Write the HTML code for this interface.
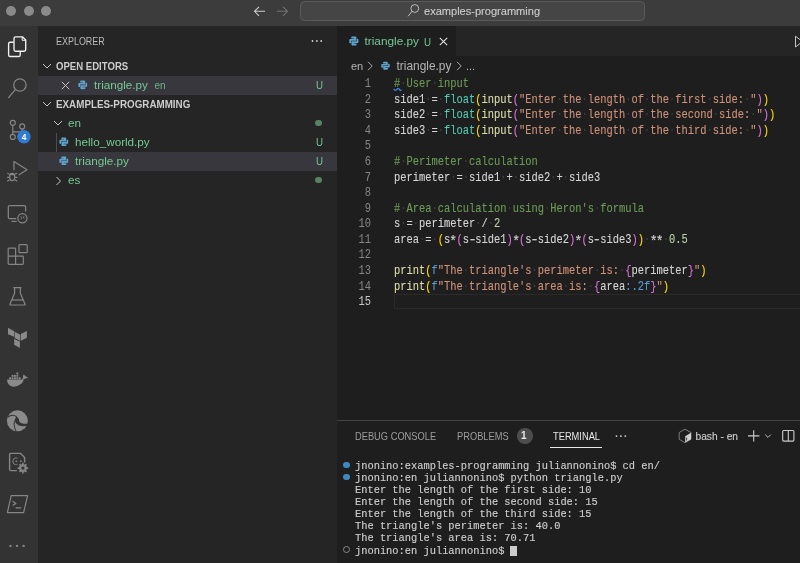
<!DOCTYPE html>
<html><head><meta charset="utf-8">
<style>
*{margin:0;padding:0;box-sizing:border-box}
html,body{width:800px;height:563px;overflow:hidden;background:#1e1e1e;font-family:"Liberation Sans",sans-serif}
.a{position:absolute}
b{font-weight:normal}i{font-style:normal}

#title{left:0;top:0;width:800px;height:26px;background:#3c3c3c}
.tl{width:10.2px;height:10.2px;border-radius:50%;background:#8a8a8a;top:6.1px}
#search{left:299.8px;top:1.2px;width:345px;height:20px;border:1px solid #5a5a5a;border-radius:4.5px;background:#454545}
#act{left:0;top:26px;width:38px;height:537px;background:#333333}
#side{left:38px;top:26px;width:299px;height:537px;background:#252526}
#tabs{left:337px;top:26px;width:463px;height:30px;background:#252526}
#tab{left:337px;top:26px;width:119px;height:30px;background:#1e1e1e}
.sans{font-family:"Liberation Sans",sans-serif;white-space:pre}
.row{left:38px;width:299px;height:19px}
.sel{background:#37373d}
.git{color:#73c991}
.hdr{font-weight:bold;font-size:10.4px;color:#cccccc;line-height:19px;transform:scaleX(0.922);transform-origin:0 0}
.code{-webkit-text-stroke:0.12px currentColor;font-family:"Liberation Mono",monospace;font-size:11.9px;transform:scaleX(0.8754);transform-origin:0 0;white-space:pre;line-height:15.59px;height:15.59px;left:394px;color:#d4d4d4}
.ln{font-family:"Liberation Mono",monospace;font-size:11.9px;transform:scaleX(0.8754);transform-origin:100% 0;white-space:pre;line-height:15.59px;height:15.59px;left:337px;width:34px;text-align:right;color:#858585}
.w{color:#3e3e3e;-webkit-text-stroke:0}
.ast{display:inline-block;transform:translateY(2.2px) scale(1.25)}
.hy{display:inline-block;transform:scaleX(1.45)}
.c{color:#6a9955}
.s{color:#ce9178}
.f{color:#dcdcaa}
.t{color:#4ec9b0}
.n{color:#b5cea8}
.k{color:#569cd6}
.b1{color:#ffd700}
.b2{color:#da70d6}
.ln.cur{color:#c6c6c6}
.term{-webkit-text-stroke:0.15px currentColor;font-family:"Liberation Mono",monospace;font-size:11.2px;transform:scaleX(0.927);transform-origin:0 0;white-space:pre;line-height:12.1px;height:12.1px;left:355px;color:#cccccc}
.ph{font-size:10.2px;color:#9d9d9d;line-height:16px;top:429px;transform:scaleX(0.913);transform-origin:0 0}
</style></head><body><div id="root" style="position:absolute;left:0;top:0;width:800px;height:563px;overflow:hidden;will-change:transform">
<svg width="0" height="0" style="position:absolute"><defs><symbol id="py" viewBox="0 0 10 10">
<path fill="#5fa3cc" d="M2.3 1.5Q2.3 0.5 3.3 0.5H6.5Q7.5 0.5 7.5 1.5V4.7H2.1V7.2H1.3Q0.3 7.2 0.3 6.2V4Q0.3 3 1.3 3H5.3V2.5H2.3Z"/>
<path fill="#5fa3cc" d="M7.7 8.5Q7.7 9.5 6.7 9.5H3.5Q2.5 9.5 2.5 8.5V5.3H7.9V2.8H8.7Q9.7 2.8 9.7 3.8V6Q9.7 7 8.7 7H4.7V7.5H7.7Z"/>
</symbol></defs></svg>
<div class="a" id="title"></div>
<div class="a tl" style="left:6.2px"></div>
<div class="a tl" style="left:23.6px"></div>
<div class="a tl" style="left:40.75px"></div>
<!-- nav arrows -->
<svg class="a" style="left:250px;top:4px" width="40" height="15" viewBox="0 0 40 15">
 <path d="M4.5 7.3h10.5M9 2.8L4.5 7.3L9 11.8" fill="none" stroke="#cccccc" stroke-width="1.1"/>
 <path d="M27 7.3h10.5M33 2.8L37.5 7.3L33 11.8" fill="none" stroke="#727272" stroke-width="1.1"/>
</svg>
<div class="a" id="search"></div>
<svg class="a" style="left:406px;top:3px" width="14" height="15" viewBox="0 0 14 15">
 <circle cx="8.8" cy="5.5" r="3.9" fill="none" stroke="#c0c0c0" stroke-width="0.95"/>
 <path d="M6 8.4L2.3 13" stroke="#c0c0c0" stroke-width="0.95" stroke-linecap="round"/>
</svg>
<div class="a sans" style="left:424px;top:4px;font-size:11.05px;line-height:14px;color:#cccccc;-webkit-text-stroke:0.12px currentColor">examples-programming</div>

<div class="a" id="act"></div>
<div class="a" id="side"></div>
<svg class="a" style="left:0;top:0" width="38" height="563" viewBox="0 0 38 563">
<defs></defs>
<!-- explorer -->
<g fill="none" stroke="#f2f2f2" stroke-width="1.35" stroke-linejoin="round">
 <path d="M13.6 42.2H10.2Q8.6 42.2 8.6 43.8V54.9Q8.6 56.5 10.2 56.5H18.6Q20.2 56.5 20.2 54.9V51.5"/>
 <path d="M15.6 36.8H22.4L25.7 40.1V49.6Q25.7 51.2 24.1 51.2H15.6Q14 51.2 14 49.6V38.4Q14 36.8 15.6 36.8Z"/>
 <path d="M22.2 37V40.3H25.5" stroke-width="1"/>
</g>
<!-- search -->
<g fill="none" stroke="#858585" stroke-width="1.3">
 <circle cx="19.9" cy="85" r="6.2"/>
 <path d="M15.6 89.3L8.3 97.8"/>
</g>
<!-- source control -->
<g fill="none" stroke="#858585" stroke-width="1.2">
 <circle cx="12.8" cy="122.8" r="2.5"/>
 <circle cx="22.2" cy="126.4" r="2.5"/>
 <circle cx="12.8" cy="136.9" r="2.5"/>
 <path d="M12.8 125.3V134.4"/>
 <path d="M22.2 128.9V129.6Q22.2 131.8 20 131.8H12.8"/>
</g>
<circle cx="23.95" cy="136.65" r="6.75" fill="#2f7bd4"/>
<text x="24" y="139.6" font-family="Liberation Sans" font-weight="bold" font-size="8.4" fill="#ffffff" text-anchor="middle">4</text>
<!-- run debug -->
<g fill="none" stroke="#858585" stroke-width="1.2" stroke-linejoin="round">
 <path d="M13.95 170.2V161.4L27 169.7L18.7 175"/>
 <ellipse cx="12.2" cy="177" rx="2.5" ry="3.6"/>
 <path d="M9.6 174.6H14.8M7.3 173.2L9.6 174.2M17.1 173.2L14.8 174.2M7.1 177.3H9.5M14.9 177.3H17.3M7.3 181.2L9.6 179.8M17.1 181.2L14.8 179.8"/>
</g>
<!-- remote explorer -->
<g fill="none" stroke="#858585" stroke-width="1.2">
 <path d="M16.2 218.6H9.6Q8.3 218.6 8.3 217.3V206.9Q8.3 205.6 9.6 205.6H24.3Q25.6 205.6 25.6 206.9V211.6"/>
 <path d="M11.5 221.4H16.8"/>
 <circle cx="22.4" cy="218.2" r="4.6"/>
 <path d="M20.6 216.3L22 217.8L20.6 219.3M24.4 216.4L23 217.3L24.4 218.2" stroke-width="0.9"/>
</g>
<!-- extensions -->
<g fill="none" stroke="#858585" stroke-width="1.2" stroke-linejoin="round">
 <path d="M8.2 256.2H15.6V248.9Q15.6 248.2 14.9 248.2H8.9Q8.2 248.2 8.2 248.9V263.6Q8.2 264.3 8.9 264.3H22.6Q23.3 264.3 23.3 263.6V256.9Q23.3 256.2 22.6 256.2H15.6V264.3"/>
 <rect x="19" y="244.7" width="8.2" height="8" rx="0.9"/>
</g>
<!-- flask -->
<g fill="none" stroke="#858585" stroke-width="1.2" stroke-linejoin="round">
 <path d="M13.3 287.6H21.5M14.6 287.6V293.3L9.9 304.3Q9.7 305 10.5 305H24.5Q25.3 305 25.1 304.3L20.3 293.3V287.6"/>
 <path d="M11.8 300H23.2"/>
</g>
<!-- terraform -->
<g fill="#8a8a8a">
 <path d="M8 327.7L14.2 331.2V336.7L8 334.2Z"/>
 <path d="M14.7 331.7L20.2 334.7V340.7L14.7 338Z"/>
 <path d="M14.2 338.9L19.9 341.6V347.9L14.2 344.8Z"/>
 <path d="M20.8 334.1L26.9 331V337.7L20.8 340.7Z"/>
</g>
<!-- docker -->
<g fill="#8a8a8a">
 <path d="M7 379.6H23.5Q24.8 379.2 25.6 378.2Q26.8 378.5 27.9 378.1Q27 376.6 25.3 376.3Q24.8 374.9 23.6 374.4Q22.6 375.8 23 377.6Q22.6 379 21.8 379.6Z"/>
 <path d="M7 379.6Q7.2 385 12 386.6Q17.5 387.2 21.5 383.6Q23.2 381.8 23.8 379.6Z"/>
 <rect x="9.2" y="377.3" width="1.9" height="1.9"/><rect x="11.6" y="377.3" width="1.9" height="1.9"/><rect x="14" y="377.3" width="1.9" height="1.9"/><rect x="16.4" y="377.3" width="1.9" height="1.9"/><rect x="18.8" y="377.3" width="1.9" height="1.9"/>
 <rect x="11.6" y="374.9" width="1.9" height="1.9"/><rect x="14" y="374.9" width="1.9" height="1.9"/><rect x="16.4" y="374.9" width="1.9" height="1.9"/>
 <rect x="16.4" y="372.5" width="1.9" height="1.9"/>
</g>
<!-- edge -->
<g>
 <circle cx="17.4" cy="420.8" r="10.5" fill="#8a8a8a"/>
 <path d="M7.6 417.2Q12.5 413.6 16.6 416.8" fill="none" stroke="#333333" stroke-width="1.1"/>
 <path d="M16.3 416.4Q19.6 418.4 19 421Q20.5 424.2 28 423.8L28 425.4Q19.6 427.6 16.2 423.6Q13.8 420.2 16.3 416.4Z" fill="#333333"/>
 <path d="M15.8 418.8Q12.2 423.6 16.2 431.6" fill="none" stroke="#333333" stroke-width="1"/>
</g>
<!-- c++ config -->
<g fill="none" stroke="#858585" stroke-width="1.4" stroke-linejoin="round">
 <path d="M16.8 470.6H10.6Q9.6 470.6 9.6 469.6V454.4Q9.6 453.4 10.6 453.4H20.6L24.6 457.4V462.6"/>
 <path d="M17.5 458.4Q16.6 457.9 15.6 457.9Q13 458 12.8 461.3Q13 464.6 15.6 464.7Q16.6 464.7 17.5 464.2" stroke-width="1"/>
 <path d="M15.3 461.3H17.3M16.3 460.3V462.3M19.8 461.3H21.8M20.8 460.3V462.3" stroke-width="0.8"/>
</g>
<g fill="#858585">
 <circle cx="22.9" cy="468.1" r="3.9"/>
 <path d="M22.1 462.8H23.7V473.4H22.1ZM17.6 467.3H28.2V468.9H17.6Z"/>
 <path d="M18.9 464.7L20.1 463.6L27 471.5L25.8 472.6Z M25.8 463.6L27 464.7L20.1 472.6L18.9 471.5Z"/>
 <circle cx="22.9" cy="468.1" r="1.6" fill="#333333"/>
</g>
<!-- terminal -->
<g fill="none" stroke="#858585" stroke-width="1.2" stroke-linejoin="round">
 <path d="M11.2 495.6H27.6L23.6 512.6H7.4Z"/>
 <path d="M12.6 501.2L15.9 503.4L12.6 505.6M15.6 507.9H21.2"/>
</g>
<!-- dots -->
<g fill="#858585"><circle cx="10.5" cy="545.9" r="1.2"/><circle cx="17" cy="545.9" r="1.2"/><circle cx="23.6" cy="545.9" r="1.2"/></g>
</svg>

<div class="a" id="tabs"></div>
<div class="a" id="tab"></div>

<!-- sidebar -->
<div class="a sans" style="left:55.5px;top:34px;font-size:10px;line-height:16px;color:#bbbbbb;transform:scaleX(0.895);transform-origin:0 0">EXPLORER</div>
<svg class="a" style="left:300px;top:30px" width="30" height="20" viewBox="300 30 30 20"><g fill="#d0d0d0"><circle cx="312.5" cy="41" r="0.9"/><circle cx="316.9" cy="41" r="0.9"/><circle cx="321.2" cy="41" r="0.9"/></g></svg>

<div class="a row" style="top:57px"></div>
<svg class="a" style="left:42px;top:62px" width="10" height="8" viewBox="0 0 10 8"><path d="M1 2l4 4l4-4" fill="none" stroke="#c5c5c5" stroke-width="1"/></svg>
<div class="a sans hdr" style="left:56px;top:57px">OPEN EDITORS</div>

<div class="a row sel" style="top:76px"></div>
<svg class="a" style="left:61px;top:81px" width="9" height="9" viewBox="0 0 9 9"><path d="M0.8 0.8l7.4 7.4M8.2 0.8l-7.4 7.4" stroke="#c5c5c5" stroke-width="1"/></svg>
<div class="a sans git" style="left:94px;top:77px;font-size:11.7px;line-height:15px">triangle.py</div>
<div class="a sans git" style="left:154.5px;top:79px;font-size:10px;line-height:14px;opacity:.85">en</div>
<div class="a sans git" style="left:315.8px;top:78px;font-size:10.8px;line-height:15px;transform:scaleX(0.9);transform-origin:0 0">U</div>

<div class="a row" style="top:95px"></div>
<svg class="a" style="left:42px;top:100px" width="10" height="8" viewBox="0 0 10 8"><path d="M1 2l4 4l4-4" fill="none" stroke="#c5c5c5" stroke-width="1"/></svg>
<div class="a sans hdr" style="left:56px;top:95px;transform:scaleX(0.946)">EXAMPLES-PROGRAMMING</div>

<svg class="a" style="left:53px;top:119px" width="10" height="8" viewBox="0 0 10 8"><path d="M1 2l4 4l4-4" fill="none" stroke="#c5c5c5" stroke-width="1"/></svg>
<div class="a sans git" style="left:68px;top:115.4px;font-size:11.7px;line-height:15px">en</div>
<div class="a" style="left:315px;top:119.5px;width:6.6px;height:6.6px;border-radius:50%;background:#58835f"></div>

<div class="a" style="left:55.5px;top:133px;width:1px;height:38px;background:#4e4e4e"></div>
<div class="a sans git" style="left:75px;top:134.4px;font-size:11.7px;line-height:15px">hello_world.py</div>
<div class="a sans git" style="left:315.8px;top:135px;font-size:10.8px;line-height:15px;transform:scaleX(0.9);transform-origin:0 0">U</div>

<div class="a row sel" style="top:152px"></div>

<div class="a sans git" style="left:75px;top:153.4px;font-size:11.7px;line-height:15px">triangle.py</div>
<div class="a sans git" style="left:315.8px;top:154px;font-size:10.8px;line-height:15px;transform:scaleX(0.9);transform-origin:0 0">U</div>

<svg class="a" style="left:55px;top:176px" width="8" height="10" viewBox="0 0 8 10"><path d="M1.5 1l4 4l-4 4" fill="none" stroke="#c5c5c5" stroke-width="1"/></svg>
<div class="a sans git" style="left:68px;top:172.4px;font-size:11.7px;line-height:15px">es</div>
<div class="a" style="left:315px;top:176.5px;width:6.6px;height:6.6px;border-radius:50%;background:#58835f"></div>

<!-- tab -->
<div class="a sans git" style="left:364.5px;top:34.4px;font-size:11.8px;line-height:15px">triangle.py</div>
<div class="a sans git" style="left:424.3px;top:34.6px;font-size:10.8px;line-height:15px;transform:scaleX(0.9);transform-origin:0 0">U</div>
<svg class="a" style="left:439px;top:36.5px" width="9" height="9" viewBox="0 0 9 9"><path d="M0.8 0.8l7.4 7.4M8.2 0.8l-7.4 7.4" stroke="#e0e0e0" stroke-width="1.1"/></svg>
<svg class="a" style="left:794px;top:35px" width="8" height="13" viewBox="0 0 8 13"><path d="M1.5 1.2v10.8l7-5.4z" fill="none" stroke="#c5c5c5" stroke-width="1"/></svg>

<!-- breadcrumbs -->
<div class="a sans" style="left:351px;top:59px;font-size:11px;line-height:15px;color:#b4b4b4">en</div>
<svg class="a" style="left:367px;top:61px" width="7" height="10" viewBox="0 0 7 10"><path d="M1 0.8l4.2 4.2l-4.2 4.2" fill="none" stroke="#a9a9a9" stroke-width="1"/></svg>
<div class="a sans" style="left:396.5px;top:59px;font-size:11.9px;line-height:15px;color:#b4b4b4">triangle.py</div>
<svg class="a" style="left:456px;top:61px" width="7" height="10" viewBox="0 0 7 10"><path d="M1 0.8l4.2 4.2l-4.2 4.2" fill="none" stroke="#a9a9a9" stroke-width="1"/></svg>
<div class="a sans" style="left:466px;top:59px;font-size:11px;line-height:15px;color:#b4b4b4">...</div>


<svg class="a" style="left:349.2px;top:36.1px" width="9.8" height="10"><use href="#py"/></svg>
<svg class="a" style="left:78.2px;top:80.2px" width="9.6" height="9.8"><use href="#py"/></svg>
<svg class="a" style="left:381.2px;top:61.2px" width="9" height="9.4"><use href="#py"/></svg>
<svg class="a" style="left:59.1px;top:137.4px" width="9.7" height="9.5"><use href="#py"/></svg>
<svg class="a" style="left:59.1px;top:156px" width="9.7" height="9.5"><use href="#py"/></svg>
<!-- CODE -->
<svg class="a" style="left:393px;top:87px" width="9" height="5" viewBox="0 0 9 5"><path d="M1 2.2Q2.2 4.3 3.6 2.6Q5.2 0.6 6.6 2.6Q7.4 3.8 8 3.2" fill="none" stroke="#3b84e4" stroke-width="1.3" stroke-linecap="round"/></svg>
<div class="a" style="left:394px;top:293.6px;width:406px;height:15px;border:1px solid #2a2a2a;border-right:none"></div>
<div class="a ln" style="top:77.00px">1</div>
<div class="a code" style="top:77.00px"><b class="c">#<i class="w">·</i>User<i class="w">·</i>input</b></div>
<div class="a ln" style="top:92.59px">2</div>
<div class="a code" style="top:92.59px">side1<i class="w">·</i>=<i class="w">·</i><b class="t">float</b><b class="b1">(</b><b class="f">input</b><b class="b2">(</b><b class="s">"Enter<i class="w">·</i>the<i class="w">·</i>length<i class="w">·</i>of<i class="w">·</i>the<i class="w">·</i>first<i class="w">·</i>side:<i class="w">·</i>"</b><b class="b2">)</b><b class="b1">)</b></div>
<div class="a ln" style="top:108.18px">3</div>
<div class="a code" style="top:108.18px">side2<i class="w">·</i>=<i class="w">·</i><b class="t">float</b><b class="b1">(</b><b class="f">input</b><b class="b2">(</b><b class="s">"Enter<i class="w">·</i>the<i class="w">·</i>length<i class="w">·</i>of<i class="w">·</i>the<i class="w">·</i>second<i class="w">·</i>side:<i class="w">·</i>"</b><b class="b2">)</b><b class="b1">)</b></div>
<div class="a ln" style="top:123.77px">4</div>
<div class="a code" style="top:123.77px">side3<i class="w">·</i>=<i class="w">·</i><b class="t">float</b><b class="b1">(</b><b class="f">input</b><b class="b2">(</b><b class="s">"Enter<i class="w">·</i>the<i class="w">·</i>length<i class="w">·</i>of<i class="w">·</i>the<i class="w">·</i>third<i class="w">·</i>side:<i class="w">·</i>"</b><b class="b2">)</b><b class="b1">)</b></div>
<div class="a ln" style="top:139.36px">5</div>
<div class="a ln" style="top:154.95px">6</div>
<div class="a code" style="top:154.95px"><b class="c">#<i class="w">·</i>Perimeter<i class="w">·</i>calculation</b></div>
<div class="a ln" style="top:170.54px">7</div>
<div class="a code" style="top:170.54px">perimeter<i class="w">·</i>=<i class="w">·</i>side1<i class="w">·</i>+<i class="w">·</i>side2<i class="w">·</i>+<i class="w">·</i>side3</div>
<div class="a ln" style="top:186.13px">8</div>
<div class="a ln" style="top:201.72px">9</div>
<div class="a code" style="top:201.72px"><b class="c">#<i class="w">·</i>Area<i class="w">·</i>calculation<i class="w">·</i>using<i class="w">·</i>Heron's<i class="w">·</i>formula</b></div>
<div class="a ln" style="top:217.31px">10</div>
<div class="a code" style="top:217.31px">s<i class="w">·</i>=<i class="w">·</i>perimeter<i class="w">·</i>/<i class="w">·</i><b class="n">2</b></div>
<div class="a ln" style="top:232.90px">11</div>
<div class="a code" style="top:232.90px">area<i class="w">·</i>=<i class="w">·</i><b class="b1">(</b>s<i class="ast">*</i><b class="b2">(</b>s<i class="hy">-</i>side1<b class="b2">)</b><i class="ast">*</i><b class="b2">(</b>s<i class="hy">-</i>side2<b class="b2">)</b><i class="ast">*</i><b class="b2">(</b>s<i class="hy">-</i>side3<b class="b2">)</b><b class="b1">)</b><i class="w">·</i><i class="ast">*</i><i class="ast">*</i><i class="w">·</i><b class="n">0.5</b></div>
<div class="a ln" style="top:248.49px">12</div>
<div class="a ln" style="top:264.08px">13</div>
<div class="a code" style="top:264.08px"><b class="f">print</b><b class="b1">(</b><b class="k">f</b><b class="s">"The<i class="w">·</i>triangle's<i class="w">·</i>perimeter<i class="w">·</i>is:<i class="w">·</i></b><b class="b2">{</b>perimeter<b class="b2">}</b><b class="s">"</b><b class="b1">)</b></div>
<div class="a ln" style="top:279.67px">14</div>
<div class="a code" style="top:279.67px"><b class="f">print</b><b class="b1">(</b><b class="k">f</b><b class="s">"The<i class="w">·</i>triangle's<i class="w">·</i>area<i class="w">·</i>is:<i class="w">·</i></b><b class="b2">{</b>area<b class="k">:.2f</b><b class="b2">}</b><b class="s">"</b><b class="b1">)</b></div>
<div class="a ln cur" style="top:295.26px">15</div>


<!-- panel -->
<div class="a" style="left:337px;top:420px;width:463px;height:1px;background:#414141"></div>
<div class="a sans ph" style="left:354.5px">DEBUG CONSOLE</div>
<div class="a sans ph" style="left:457px">PROBLEMS</div>
<div class="a" style="left:517px;top:428px;width:15.6px;height:15.6px;border-radius:50%;background:#4d4d4d"></div>
<div class="a sans" style="left:521px;top:429px;font-size:10px;font-weight:bold;line-height:14px;color:#e8e8e8">1</div>
<div class="a sans ph" style="left:552.5px;color:#e7e7e7">TERMINAL</div>
<div class="a" style="left:550px;top:446.5px;width:52px;height:1.2px;background:#e7e7e7"></div>
<svg class="a" style="left:608px;top:426px" width="26" height="20" viewBox="608 426 26 20"><g fill="#d0d0d0"><circle cx="616.5" cy="436.1" r="0.95"/><circle cx="620.9" cy="436.1" r="0.95"/><circle cx="625.3" cy="436.1" r="0.95"/></g></svg>
<div class="a sans" style="left:695.5px;top:429.5px;font-size:10.2px;line-height:14px;color:#cccccc;-webkit-text-stroke:0.15px currentColor">bash - en</div>

<svg class="a" style="left:670px;top:424px" width="130" height="24" viewBox="670 424 130 24">
 <path d="M685 429.2L691 432.5V439.3L685 442.7L679.2 439.3V432.5Z" fill="none" stroke="#9a9a9a" stroke-width="0.75"/>
 <path d="M685.2 436.2L691 432.8V439.2L685.2 442.6Z" fill="#cfcfcf"/>
 <path d="M686.6 437.6V440.4" stroke="#1e1e1e" stroke-width="0.8"/>
 <path d="M748 435.9H759.4M753.7 430.2V441.6" stroke="#cccccc" stroke-width="1.1"/>
 <path d="M765.2 434.6L768 437.4L770.8 434.6" fill="none" stroke="#cccccc" stroke-width="0.9"/>
 <rect x="782.7" y="430.5" width="11.2" height="10.6" rx="1" fill="none" stroke="#cccccc" stroke-width="1.1"/>
 <path d="M788.3 430.5V441.1" stroke="#cccccc" stroke-width="1.1"/>
</svg>
<div class="a term" style="top:459.80px">jnonino:examples-programming juliannonino$ cd en/</div>
<div class="a term" style="top:471.90px">jnonino:en juliannonino$ python triangle.py</div>
<div class="a term" style="top:484.00px">Enter the length of the first side: 10</div>
<div class="a term" style="top:496.10px">Enter the length of the second side: 15</div>
<div class="a term" style="top:508.20px">Enter the length of the third side: 15</div>
<div class="a term" style="top:520.30px">The triangle's perimeter is: 40.0</div>
<div class="a term" style="top:532.40px">The triangle's area is: 70.71</div>
<div class="a term" style="top:544.50px">jnonino:en juliannonino$ </div>

<div class="a" style="left:342.8px;top:461.5px;width:6.9px;height:6.9px;border-radius:50%;background:#3d89bd"></div>
<div class="a" style="left:342.8px;top:473.6px;width:6.9px;height:6.9px;border-radius:50%;background:#3d89bd"></div>
<div class="a" style="left:342.5px;top:546px;width:7px;height:7px;border-radius:50%;border:1px solid #8a8a8a"></div>
<div class="a" style="left:510px;top:545.5px;width:6.5px;height:10px;background:#cccccc"></div>
</div></body></html>
